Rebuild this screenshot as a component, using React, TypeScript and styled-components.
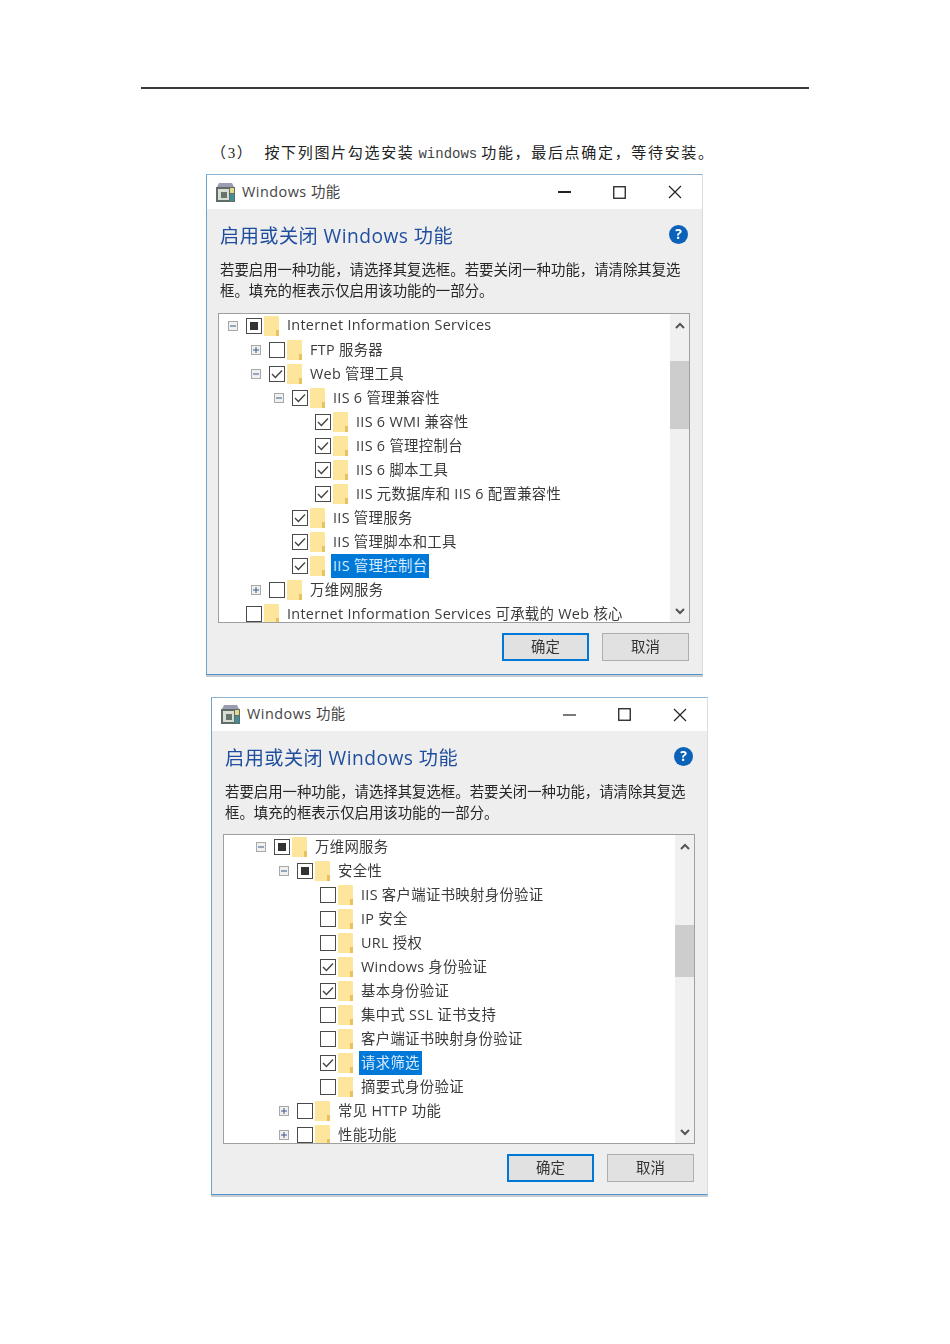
import React from "react";
import styled, { createGlobalStyle } from "styled-components";

type Check = "on" | "off" | "mixed";
type Expander = "plus" | "minus" | "none";

type TreeRow = {
  level: number;
  expander: Expander;
  check: Check;
  label: string;
  selected?: boolean;
};

const firstRows: TreeRow[] = [
  { level: 0, expander: "minus", check: "mixed", label: "Internet Information Services" },
  { level: 1, expander: "plus", check: "off", label: "FTP 服务器" },
  { level: 1, expander: "minus", check: "on", label: "Web 管理工具" },
  { level: 2, expander: "minus", check: "on", label: "IIS 6 管理兼容性" },
  { level: 3, expander: "none", check: "on", label: "IIS 6 WMI 兼容性" },
  { level: 3, expander: "none", check: "on", label: "IIS 6 管理控制台" },
  { level: 3, expander: "none", check: "on", label: "IIS 6 脚本工具" },
  { level: 3, expander: "none", check: "on", label: "IIS 元数据库和 IIS 6 配置兼容性" },
  { level: 2, expander: "none", check: "on", label: "IIS 管理服务" },
  { level: 2, expander: "none", check: "on", label: "IIS 管理脚本和工具" },
  { level: 2, expander: "none", check: "on", label: "IIS 管理控制台", selected: true },
  { level: 1, expander: "plus", check: "off", label: "万维网服务" },
  { level: 0, expander: "none", check: "off", label: "Internet Information Services 可承载的 Web 核心" },
];

const secondRows: TreeRow[] = [
  { level: 1, expander: "minus", check: "mixed", label: "万维网服务" },
  { level: 2, expander: "minus", check: "mixed", label: "安全性" },
  { level: 3, expander: "none", check: "off", label: "IIS 客户端证书映射身份验证" },
  { level: 3, expander: "none", check: "off", label: "IP 安全" },
  { level: 3, expander: "none", check: "off", label: "URL 授权" },
  { level: 3, expander: "none", check: "on", label: "Windows 身份验证" },
  { level: 3, expander: "none", check: "on", label: "基本身份验证" },
  { level: 3, expander: "none", check: "off", label: "集中式 SSL 证书支持" },
  { level: 3, expander: "none", check: "off", label: "客户端证书映射身份验证" },
  { level: 3, expander: "none", check: "on", label: "请求筛选", selected: true },
  { level: 3, expander: "none", check: "off", label: "摘要式身份验证" },
  { level: 2, expander: "plus", check: "off", label: "常见 HTTP 功能" },
  { level: 2, expander: "plus", check: "off", label: "性能功能" },
];

const GlobalStyle = createGlobalStyle`
  html, body {
    margin: 0;
    padding: 0;
    background: #fff;
  }
`;

const Page = styled.div`
  width: 950px;
  height: 1344px;
  padding-top: 87px;
  box-sizing: border-box;
  overflow: hidden;
`;

const Rule = styled.div`
  height: 2px;
  margin: 0 141px;
  background: #3a3a3a;
`;

const Caption = styled.p`
  height: 22px;
  margin: 53px 0 10px 211px;
  font-family: "Liberation Serif", "Noto Sans CJK SC", serif;
  font-size: 15px;
  line-height: 22px;
  letter-spacing: 1.68px;
  color: #222;
  white-space: pre;
`;

const Mono = styled.span`
  margin: 0 -1.5px;
  font-family: "Liberation Mono", monospace;
  font-size: 14px;
  letter-spacing: 0;
  color: #444;
`;

const Window = styled.section<{ $left: number; $gap: number; $height: number }>`
  display: flex;
  flex-direction: column;
  box-sizing: border-box;
  width: 497px;
  height: ${(p) => p.$height}px;
  margin: ${(p) => p.$gap}px 0 0 ${(p) => p.$left}px;
  border-top: 1px solid #8fb2cf;
  border-left: 1px solid #6ea3cc;
  border-right: 1px solid #d8dde2;
  border-bottom: 1px solid #4f96d0;
  box-shadow: 0 2px 0 #c8cdd2;
  background: #eeeeee;
  font-family: "Open Sans", "Noto Sans CJK SC", sans-serif;
  color: #2e2e2e;
  filter: blur(0.35px);
`;

const TitleBar = styled.header<{ $height: number }>`
  display: flex;
  align-items: center;
  flex-shrink: 0;
  height: ${(p) => p.$height}px;
  padding-left: 9px;
  background: #fff;
  font-size: 14.4px;
`;

const TitleText = styled.span`
  flex: 1;
  margin-left: 7px;
  padding-bottom: 4px;
  color: #444;
  letter-spacing: 0.5px;
`;

const WinButton = styled.div`
  display: flex;
  align-items: center;
  justify-content: center;
  width: 55px;
  height: 100%;
`;

const Body = styled.div`
  display: flex;
  flex-direction: column;
  flex: 1;
  padding: 0 13px 0 11px;
`;

const HeadRow = styled.div`
  display: flex;
  align-items: center;
  justify-content: space-between;
  height: 24px;
  margin-top: 14px;
  padding-left: 2px;
`;

const Heading = styled.h1`
  margin: 0;
  font-size: 19.2px;
  font-weight: 400;
  color: #1f4e9e;
  letter-spacing: 0.45px;
`;

const Help = styled.div`
  display: flex;
  align-items: center;
  justify-content: center;
  width: 19px;
  height: 19px;
  margin-right: 1px;
  margin-bottom: 2px;
  border-radius: 50%;
  background: #0b62b8;
  color: #fff;
  font-size: 14px;
  font-weight: 700;
  line-height: 1;
`;

const Description = styled.p`
  width: 472px;
  height: 42px;
  margin: 12px 0 0 2px;
  font-size: 14.4px;
  line-height: 21px;
  color: #262626;
  overflow: hidden;
`;

const ListBox = styled.div<{ $gap: number }>`
  display: flex;
  flex-shrink: 0;
  box-sizing: border-box;
  width: 472px;
  height: 310px;
  margin-top: ${(p) => p.$gap}px;
  border: 1px solid #a0a0a0;
  background: #fff;
`;

const Tree = styled.div`
  flex: 1;
  overflow: hidden;
`;

const Row = styled.div<{ $level: number }>`
  display: flex;
  align-items: center;
  height: 24px;
  padding-left: ${(p) => 9 + p.$level * 23}px;
  font-size: 14.4px;
  white-space: nowrap;
`;

const ExpanderBox = styled.div<{ $empty: boolean }>`
  display: flex;
  align-items: center;
  justify-content: center;
  flex-shrink: 0;
  box-sizing: border-box;
  width: 10px;
  height: 10px;
  border: ${(p) => (p.$empty ? "none" : "1px solid #a8a8a8")};
  background: ${(p) => (p.$empty ? "transparent" : "#f0f0f0")};
`;

const CheckBox = styled.div`
  display: flex;
  align-items: center;
  justify-content: center;
  flex-shrink: 0;
  box-sizing: border-box;
  width: 16px;
  height: 16px;
  margin-left: 8px;
  border: 1.5px solid #4a4a4a;
  background: #fff;
`;

const MixedFill = styled.div`
  width: 8px;
  height: 8px;
  background: #333;
`;

const Folder = styled.div`
  position: relative;
  flex-shrink: 0;
  width: 15px;
  height: 20px;
  margin-left: 2px;
  background: #fde59b;
  border-radius: 1px 1px 0 0;

  &::after {
    content: "";
    position: absolute;
    right: 0;
    bottom: 0;
    width: 3px;
    height: 6px;
    background: #e8c25f;
  }
`;

const Label = styled.span<{ $selected?: boolean }>`
  display: flex;
  align-items: center;
  box-sizing: border-box;
  height: 24px;
  margin-left: 6px;
  padding: 0 2px 3px;
  background: ${(p) => (p.$selected ? "#0078d7" : "transparent")};
  color: ${(p) => (p.$selected ? "#d8ecff" : "#3a3a3a")};
  letter-spacing: 0.3px;
`;

const ScrollBar = styled.div`
  display: flex;
  flex-direction: column;
  flex-shrink: 0;
  width: 19px;
  background: #f0f0f0;
`;

const ScrollArrow = styled.div`
  display: flex;
  align-items: center;
  justify-content: center;
  height: 22px;
`;

const ScrollTrack = styled.div`
  flex: 1;
`;

const ScrollThumb = styled.div<{ $top: number; $height: number }>`
  height: ${(p) => p.$height}px;
  margin-top: ${(p) => p.$top}px;
  background: #cdcdcd;
`;

const Footer = styled.div`
  display: flex;
  justify-content: flex-end;
  gap: 13px;
  margin-top: 10px;
`;

const Button = styled.div<{ $primary?: boolean }>`
  display: flex;
  align-items: center;
  justify-content: center;
  box-sizing: border-box;
  width: 87px;
  height: 28px;
  padding-bottom: 3px;
  background: #e1e1e1;
  border: ${(p) => (p.$primary ? "2px solid #0078d7" : "1px solid #adadad")};
  font-size: 14.4px;
  color: #333;
`;

const AppIcon = () => (
  <svg width="19" height="19" viewBox="0 0 19 19">
    <path d="M3 0h13l2 4H1z" fill="#9a9cb4" />
    <rect x="0" y="4" width="19" height="15" fill="#5f6d66" />
    <rect x="2" y="6" width="11" height="11" fill="#d9ddd6" />
    <rect x="5" y="9" width="6" height="6" fill="#66766c" />
    <rect x="14" y="5" width="4" height="5" fill="#e4d98a" />
    <rect x="14" y="11" width="4" height="7" fill="#3f8f95" />
  </svg>
);

const Minimize = ({ weight }: { weight: number }) => (
  <svg width="14" height="14" viewBox="0 0 14 14">
    <path d="M0 7h13" stroke="#222" strokeWidth={weight} />
  </svg>
);

const Maximize = () => (
  <svg width="13" height="13" viewBox="0 0 13 13">
    <rect x="0.75" y="0.75" width="11.5" height="11.5" fill="none" stroke="#222" strokeWidth="1.3" />
  </svg>
);

const Close = () => (
  <svg width="14" height="14" viewBox="0 0 14 14">
    <path d="M1 1l12 12M13 1L1 13" stroke="#222" strokeWidth="1.2" />
  </svg>
);

const Tick = () => (
  <svg width="12" height="10" viewBox="0 0 12 10">
    <path d="M1 5l3.4 3.4L11 1.4" fill="none" stroke="#444" strokeWidth="1.4" />
  </svg>
);

const PlusMinus = ({ plus }: { plus: boolean }) => (
  <svg width="8" height="8" viewBox="0 0 8 8">
    <path d={plus ? "M1 4h6M4 1v6" : "M1 4h6"} stroke="#3b5a8c" strokeWidth="1" />
  </svg>
);

const Chevron = ({ up }: { up: boolean }) => (
  <svg width="10" height="7" viewBox="0 0 10 7">
    <path d={up ? "M1 6l4-4 4 4" : "M1 1l4 4 4-4"} fill="none" stroke="#555" strokeWidth="2" />
  </svg>
);

const TreeItem = ({ row }: { row: TreeRow }) => (
  <Row $level={row.level}>
    <ExpanderBox $empty={row.expander === "none"}>
      {row.expander !== "none" && <PlusMinus plus={row.expander === "plus"} />}
    </ExpanderBox>
    <CheckBox>
      {row.check === "on" && <Tick />}
      {row.check === "mixed" && <MixedFill />}
    </CheckBox>
    <Folder />
    <Label $selected={row.selected}>{row.label}</Label>
  </Row>
);

type DialogProps = {
  left: number;
  gap: number;
  height: number;
  titleHeight: number;
  listGap: number;
  rows: TreeRow[];
  thumbTop: number;
  thumbHeight: number;
  minimizeWeight: number;
};

const Dialog = ({ left, gap, height, titleHeight, listGap, rows, thumbTop, thumbHeight, minimizeWeight }: DialogProps) => (
  <Window $left={left} $gap={gap} $height={height}>
    <TitleBar $height={titleHeight}>
      <AppIcon />
      <TitleText>Windows 功能</TitleText>
      <WinButton><Minimize weight={minimizeWeight} /></WinButton>
      <WinButton><Maximize /></WinButton>
      <WinButton><Close /></WinButton>
    </TitleBar>
    <Body>
      <HeadRow>
        <Heading>启用或关闭 Windows 功能</Heading>
        <Help>?</Help>
      </HeadRow>
      <Description>
        若要启用一种功能，请选择其复选框。若要关闭一种功能，请清除其复选框。填充的框表示仅启用该功能的一部分。
      </Description>
      <ListBox $gap={listGap}>
        <Tree>
          {rows.map((row) => (
            <TreeItem key={row.label} row={row} />
          ))}
        </Tree>
        <ScrollBar>
          <ScrollArrow><Chevron up /></ScrollArrow>
          <ScrollTrack>
            <ScrollThumb $top={thumbTop} $height={thumbHeight} />
          </ScrollTrack>
          <ScrollArrow><Chevron up={false} /></ScrollArrow>
        </ScrollBar>
      </ListBox>
      <Footer>
        <Button $primary>确定</Button>
        <Button>取消</Button>
      </Footer>
    </Body>
  </Window>
);

export default function App() {
  return (
    <Page>
      <GlobalStyle />
      <Rule />
      <Caption>
        （3）  按下列图片勾选安装 <Mono>windows</Mono> 功能，最后点确定，等待安装。
      </Caption>
      <Dialog left={206} gap={0} height={501} titleHeight={34} listGap={12} rows={firstRows} thumbTop={25} thumbHeight={68} minimizeWeight={2} />
      <Dialog left={211} gap={22} height={498} titleHeight={33} listGap={11} rows={secondRows} thumbTop={68} thumbHeight={52} minimizeWeight={1.2} />
    </Page>
  );
}
